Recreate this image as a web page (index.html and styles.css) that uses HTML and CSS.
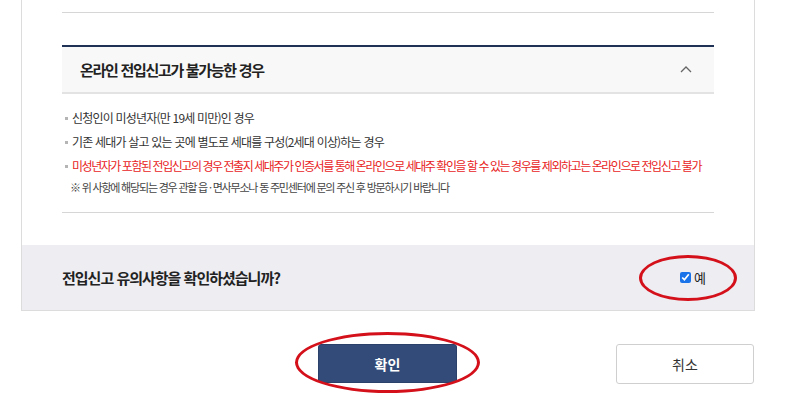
FILE: index.html
```html
<!DOCTYPE html>
<html lang="ko">
<head>
<meta charset="utf-8">
<link rel="stylesheet" href="styles.css">
</head>
<body>
<div class="panel">
  <div class="inner">
    <div class="prev"></div>
    <div class="acc">
      <div class="acc-head">
        <span class="acc-title">온라인 전입신고가 불가능한 경우</span>
        <svg class="chev" width="12" height="8" viewBox="0 0 12 8"><path d="M1 7 L6 2 L11 7" fill="none" stroke="#666" stroke-width="1.3"/></svg>
      </div>
      <ul class="list">
        <li>신청인이 미성년자(만 19세 미만)인 경우</li>
        <li>기존 세대가 살고 있는 곳에 별도로 세대를 구성(2세대 이상)하는 경우</li>
        <li class="red">미성년자가 포함된 전입신고의 경우 전출지 세대주가 인증서를 통해 온라인으로 세대주 확인을 할 수 있는 경우를 제외하고는 온라인으로 전입신고 불가</li>
      </ul>
      <p class="note">※ 위 사항에 해당되는 경우 관할 읍 · 면사무소나 동 주민센터에 문의 주신 후 방문하시기 바랍니다</p>
    </div>
  </div>
  <div class="confirm">
    <span class="q">전입신고 유의사항을 확인하셨습니까?</span>
    <label class="yes"><input type="checkbox" checked><span>예</span><span class="mark mark-yes"></span></label>
  </div>
</div>
<div class="actions">
  <button class="btn btn-ok">확인<span class="mark mark-ok"></span></button>
  <button class="btn btn-cancel">취소</button>
</div>
</body>
</html>
```
FILE: styles.css
```css
* { box-sizing: border-box; }
body {
  margin: 0;
  width: 800px;
  height: 404px;
  overflow: hidden;
  background: #fff;
  font-family: "Noto Sans CJK KR", "Noto Sans", sans-serif;
  color: #222;
}
.panel {
  margin-left: 21px;
  width: 734px;
  border: 1px solid #dcdcdc;
  border-top: none;
}
.inner {
  padding: 0 40px 0 40px;
}
.prev {
  height: 13px;
  border-bottom: 1px solid #d6d6d6;
}
.acc {
  margin-top: 32px;
  border-bottom: 1px solid #d6d6d6;
  padding-bottom: 16px;
  margin-bottom: 32px;
}
.acc-head {
  height: 49px;
  border-top: 2px solid #1f3155;
  border-bottom: 2px solid #e3e3e3;
  background: #f8f8f8;
  display: flex;
  align-items: center;
  justify-content: space-between;
  padding: 0 22px 0 18px;
}
.acc-title {
  font-size: 15px;
  font-weight: 700;
  letter-spacing: -1.3px;
  color: #222;
}
.chev { display: block; margin-top: -1px; }
.list {
  list-style: none;
  margin: 0;
  padding: 12px 0 0 3px;
}
.list li {
  position: relative;
  padding-left: 7px;
  font-size: 12px;
  line-height: 24px;
  letter-spacing: -0.8px;
  color: #333;
  white-space: nowrap;
}
.list li::before {
  content: "";
  position: absolute;
  left: 0;
  top: 11px;
  width: 3px;
  height: 3px;
  background: #b5b5b5;
}
.list li.red {
  color: #e8231d;
  letter-spacing: -1.45px;
}
.note {
  margin: 0 0 0 8px;
  font-size: 11px;
  line-height: 18px;
  letter-spacing: -1.2px;
  color: #444;
  white-space: nowrap;
}
.confirm {
  height: 65px;
  background: #ededf2;
  display: flex;
  align-items: center;
  justify-content: space-between;
  padding: 0 48px 0 40px;
}
.q {
  font-size: 15px;
  font-weight: 700;
  letter-spacing: -1px;
  color: #222;
}
.yes {
  position: relative;
  display: flex;
  align-items: center;
  font-size: 13px;
  line-height: 19px;
  color: #222;
}
.yes input {
  margin: 0 3px 0 0;
  width: 11px;
  height: 11px;
  accent-color: #1a73e8;
}
.mark {
  position: absolute;
  border: 3px solid #d4111b;
  border-radius: 50%;
  pointer-events: none;
}
.mark-yes {
  left: -41px;
  top: -13px;
  width: 98px;
  height: 46px;
}
.actions {
  display: flex;
  justify-content: space-between;
  padding: 33px 46px 0 318px;
}
.btn {
  font-family: inherit;
  font-size: 14px;
  cursor: pointer;
}
.btn-ok {
  position: relative;
  width: 139px;
  height: 39px;
  background: #334b78;
  color: #fff;
  font-weight: 700;
  border: 1px solid #2c4169;
  border-radius: 3px;
}
.mark-ok {
  left: -24px;
  top: -13px;
  width: 185px;
  height: 61px;
}
.btn-cancel {
  width: 138px;
  height: 40px;
  background: #fff;
  color: #333;
  border: 1px solid #cfcfcf;
  border-radius: 3px;
}
```
